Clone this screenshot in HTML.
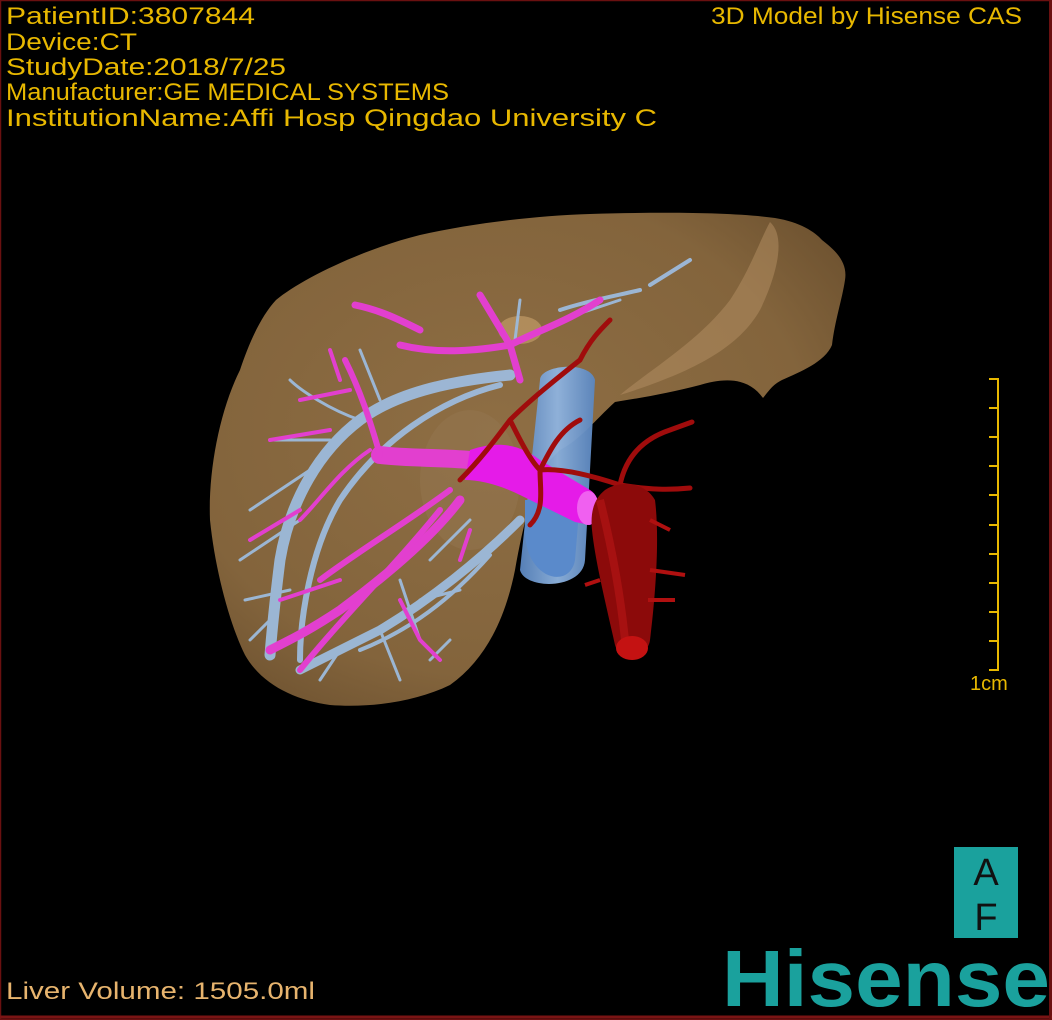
<!DOCTYPE html>
<html><head><meta charset="utf-8"><style>
html,body{margin:0;padding:0;background:#000;width:1052px;height:1020px;overflow:hidden}
svg{display:block}
</style></head><body>
<svg width="1052" height="1020" viewBox="0 0 1052 1020" xmlns="http://www.w3.org/2000/svg">
<defs>
<radialGradient id="lg" cx="0.45" cy="0.45" r="0.7">
<stop offset="0" stop-color="#8e6e44"/><stop offset="0.7" stop-color="#83643c"/><stop offset="1" stop-color="#6a4f2e"/>
</radialGradient>
<linearGradient id="ivc" x1="0" x2="1"><stop offset="0" stop-color="#5a86c0"/><stop offset="0.5" stop-color="#8fb4e0"/><stop offset="1" stop-color="#5a86c0"/></linearGradient>
</defs>
<rect width="1052" height="1020" fill="#000"/>
<rect x="0.5" y="0.5" width="1051" height="1019" fill="none" stroke="#6a1010" stroke-width="1.5"/>
<line x1="0" y1="1017" x2="1052" y2="1017" stroke="#7a1414" stroke-width="3"/>
<line x1="1050" y1="0" x2="1050" y2="1020" stroke="#6a1010" stroke-width="2"/>

<!-- liver -->
<path d="M276,300 C300,280 360,250 420,235 C470,224 530,216 590,214 C660,212 730,212 775,218 C800,222 815,232 822,240 C835,250 848,262 845,280 C842,300 835,320 832,345 C825,362 800,372 782,380 C772,385 768,392 763,398 C750,380 730,376 700,385 C670,393 640,398 615,402 C595,420 580,440 560,450 L540,470 C530,500 522,530 515,570 C505,620 485,660 450,685 C415,702 370,708 330,705 C295,700 262,685 245,655 C230,625 215,570 210,520 C208,470 220,410 240,370 C250,340 262,315 276,300 Z" fill="url(#lg)"/>
<path d="M770,222 C790,240 770,290 760,310 C740,345 700,370 620,395 C650,370 700,340 730,300 C750,270 760,240 770,222 Z" fill="#b08d60" opacity="0.55"/>
<ellipse cx="470" cy="480" rx="50" ry="70" fill="#937550" opacity="0.5"/>
<ellipse cx="520" cy="330" rx="22" ry="14" fill="#c9a46e" opacity="0.6"/>

<!-- blue hepatic veins -->
<g fill="none" stroke="#9dbbdc" stroke-linecap="round" opacity="0.95">
<path d="M510,375 C460,380 400,390 360,420 C320,450 290,500 280,560 C275,600 272,630 270,655" stroke-width="11"/>
<path d="M500,385 C440,400 380,440 340,500 C310,550 300,620 300,660" stroke-width="6"/>
<path d="M520,520 C480,560 430,600 380,630 C350,645 320,660 300,670" stroke-width="9"/>
<path d="M490,555 C450,600 410,630 360,650" stroke-width="4"/>
<path d="M360,420 C330,410 300,390 290,380 M380,400 L360,350 M330,440 L270,440 M310,470 L250,510 M300,520 L240,560 M290,590 L245,600 M420,600 L460,590 M430,560 L470,520 M380,630 L400,680 M340,650 L320,680 M400,580 L420,640 M620,300 L560,320 M520,300 L515,340 M450,640 L430,660 M270,620 L250,640" stroke-width="3"/>
<path d="M560,310 C590,300 620,295 640,290 M650,285 L690,260" stroke-width="4"/>
</g>
<!-- magenta portal branches -->
<g fill="none" stroke="#e23fcf" stroke-linecap="round">
<path d="M380,455 C420,460 470,455 520,468" stroke-width="18"/>
<path d="M510,345 C480,350 440,355 400,345 M510,345 C540,330 570,320 600,300 M510,345 L480,295 M510,345 L520,380 M420,330 C400,320 380,310 355,305" stroke-width="7"/>
<path d="M460,500 C430,540 380,580 340,610 C310,630 290,640 270,650" stroke-width="9"/>
<path d="M450,490 C410,520 360,550 320,580" stroke-width="6"/>
<path d="M440,510 C400,560 340,620 300,670" stroke-width="6"/>
<path d="M370,450 C340,470 320,500 300,520 M340,380 L330,350 M350,390 L300,400 M330,430 L270,440 M300,510 L250,540 M340,580 L280,600 M400,600 L420,640 M460,560 L470,530 M420,640 L440,660" stroke-width="4"/>
<path d="M380,455 C370,420 360,390 345,360" stroke-width="6"/>
</g>
<!-- IVC -->
<path d="M540,380 C540,365 590,360 595,380 L585,560 C583,590 525,590 520,570 Z" fill="url(#ivc)" opacity="0.95"/>
<path d="M525,530 C525,580 570,590 575,560 L580,500 L525,500 Z" fill="#5a8acb"/>
<!-- portal trunk -->
<path d="M470,450 C500,440 520,445 540,460 L590,490 C602,497 602,520 590,525 L575,522 L520,495 C500,485 480,480 465,480 Z" fill="#e51be8"/>
<ellipse cx="588" cy="508" rx="11" ry="17" fill="#f060f0"/>
<!-- red arteries -->
<g fill="none" stroke="#a00c0c" stroke-linecap="round">
<path d="M460,480 C480,460 495,440 510,420 M510,420 C520,440 530,460 540,470 C560,468 590,475 620,485 C650,490 670,490 690,488 M540,470 C540,490 545,510 530,525 M540,470 C550,450 560,430 580,420 M510,420 C530,400 555,380 580,360 C590,340 600,330 610,320" stroke-width="5"/>
<path d="M620,485 C625,460 640,440 670,430 L692,422" stroke-width="5"/>
</g>
<!-- aorta -->
<path d="M605,490 C620,480 645,482 655,500 C660,540 655,600 650,640 C648,658 620,662 615,645 C605,600 595,560 592,530 C590,510 595,498 605,490 Z" fill="#8c0a0a"/>
<path d="M600,500 C610,540 620,590 625,640" stroke="#b01414" stroke-width="8" fill="none" opacity="0.7"/>
<ellipse cx="632" cy="648" rx="16" ry="12" fill="#c41212"/>
<path d="M650,570 L685,575 M650,520 L670,530 M600,580 L585,585 M648,600 L675,600" stroke="#b01010" stroke-width="4"/>

<!-- scale bar -->
<g stroke="#e8b800" stroke-width="2">
<line x1="998" y1="379" x2="998" y2="670"/>
<line x1="989" y1="379" x2="999" y2="379"/><line x1="989" y1="408" x2="999" y2="408"/><line x1="989" y1="437" x2="999" y2="437"/><line x1="989" y1="466" x2="999" y2="466"/><line x1="989" y1="495" x2="999" y2="495"/><line x1="989" y1="525" x2="999" y2="525"/><line x1="989" y1="554" x2="999" y2="554"/><line x1="989" y1="583" x2="999" y2="583"/><line x1="989" y1="612" x2="999" y2="612"/><line x1="989" y1="641" x2="999" y2="641"/><line x1="989" y1="670" x2="999" y2="670"/>
</g>
<text x="970" y="690" font-family="Liberation Sans, sans-serif" font-size="20" fill="#e8b800">1cm</text>

<!-- texts -->
<g font-family="Liberation Sans, sans-serif" font-size="24" fill="#e8b800">
<text x="6" y="24" textLength="249" lengthAdjust="spacingAndGlyphs">PatientID:3807844</text>
<text x="6" y="50" textLength="131" lengthAdjust="spacingAndGlyphs">Device:CT</text>
<text x="6" y="75" textLength="280" lengthAdjust="spacingAndGlyphs">StudyDate:2018/7/25</text>
<text x="6" y="100" textLength="443" lengthAdjust="spacingAndGlyphs">Manufacturer:GE MEDICAL SYSTEMS</text>
<text x="6" y="126" textLength="651" lengthAdjust="spacingAndGlyphs">InstitutionName:Affi Hosp Qingdao University C</text>
<text x="711" y="24" textLength="311" lengthAdjust="spacingAndGlyphs">3D Model by Hisense CAS</text>
<text x="6" y="999" textLength="309" lengthAdjust="spacingAndGlyphs" fill="#e7b46e">Liver Volume: 1505.0ml</text>
</g>

<!-- AF box -->
<rect x="954" y="847" width="64" height="91" fill="#1aa19d"/>
<text x="986" y="885" font-family="Liberation Sans, sans-serif" font-size="38" fill="#111" text-anchor="middle">A</text>
<text x="986" y="930" font-family="Liberation Sans, sans-serif" font-size="38" fill="#111" text-anchor="middle">F</text>
<!-- Hisense logo -->
<text x="722" y="1006" font-family="Liberation Sans, sans-serif" font-size="80" font-weight="bold" fill="#1aa19d" textLength="328" lengthAdjust="spacingAndGlyphs">Hisense</text>
</svg>
</body></html>
